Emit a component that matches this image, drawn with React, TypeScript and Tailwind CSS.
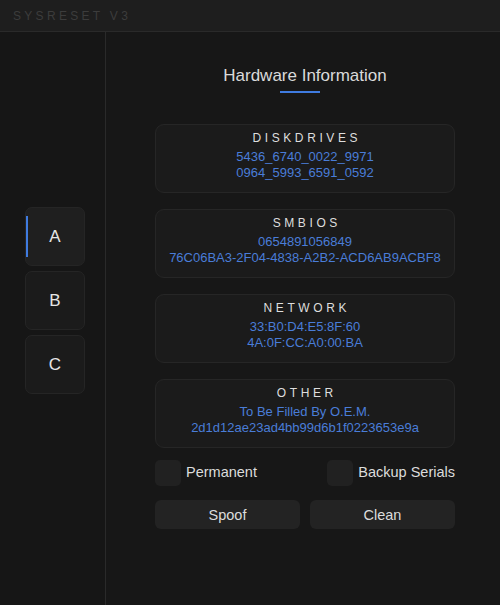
import React, { useState } from "react";

const sections = [
  { title: "DISKDRIVES", values: ["5436_6740_0022_9971", "0964_5993_6591_0592"] },
  { title: "SMBIOS", values: ["0654891056849", "76C06BA3-2F04-4838-A2B2-ACD6AB9ACBF8"] },
  { title: "NETWORK", values: ["33:B0:D4:E5:8F:60", "4A:0F:CC:A0:00:BA"] },
  { title: "OTHER", values: ["To Be Filled By O.E.M.", "2d1d12ae23ad4bb99d6b1f0223653e9a"] },
];

export default function App() {
  const [tab, setTab] = useState("A");
  const [permanent, setPermanent] = useState(false);
  const [backup, setBackup] = useState(false);

  return (
    <div
      className="w-[500px] h-[605px] bg-[#171717] flex flex-col overflow-hidden"
      style={{ fontFamily: '"Liberation Sans", Arial, sans-serif' }}
    >
      {/* title bar */}
      <div className="h-[32px] shrink-0 bg-[#1e1e1e] border-b border-[#2a2a2a] flex items-center pl-[13px]">
        <span className="text-[12px] tracking-[3.3px] text-[#3c3c3c]">SYSRESET V3</span>
      </div>

      <div className="flex flex-1 min-h-0">
        {/* sidebar */}
        <div className="w-[106px] shrink-0 border-r border-[#2a2a2a] bg-[#161616] pt-[175px] pl-[25px] flex flex-col gap-[5px]">
          {["A", "B", "C"].map((t) => (
            <button
              key={t}
              onClick={() => setTab(t)}
              className={
                "relative w-[60px] h-[59px] rounded-[7px] border border-[#252525] flex items-center justify-center text-[17px] text-[#e6e6e6] " +
                (tab === t ? "bg-[#1f1f1f]" : "bg-[#1b1b1b]")
              }
            >
              {tab === t && (
                <span className="absolute left-0 top-[8px] w-[2px] h-[41px] bg-[#3f7be0]" />
              )}
              {t}
            </button>
          ))}
        </div>

        {/* main */}
        <div className="flex-1 pl-[49px] pt-[32px]">
          <div className="w-[300px] flex flex-col">
            <div className="flex flex-col items-center">
              <h1 className="text-[17px] leading-[24px] text-[#dadada]">Hardware Information</h1>
              <div className="mt-[3px] mr-[10px] w-[40px] h-[2px] bg-[#3f7be0]" />
            </div>

            <div className="mt-[31px] flex flex-col gap-[16px]">
              {sections.map((s) => (
                <div
                  key={s.title}
                  className="h-[69px] rounded-[9px] border border-[#262626] bg-[#1b1b1b] flex flex-col items-center pt-[4.5px]"
                >
                  <div className="text-[12px] leading-[16px] tracking-[3.6px] pl-[3.6px] text-[#dedede]">
                    {s.title}
                  </div>
                  <div className="mt-[3px] flex flex-col items-center text-[13px] leading-[16px] text-[#4a7dd8]">
                    {s.values.map((v) => (
                      <div key={v}>{v}</div>
                    ))}
                  </div>
                </div>
              ))}
            </div>

            <div className="mt-[12px] flex items-center justify-between">
              <label className="flex items-center gap-[5px] cursor-pointer" onClick={() => setPermanent(!permanent)}>
                <span className="w-[26px] h-[26px] rounded-[5px] bg-[#212121] flex items-center justify-center text-[#4a7dd8] text-[14px]">
                  {permanent ? "✓" : ""}
                </span>
                <span className="text-[14.5px] text-[#dcdcdc]">Permanent</span>
              </label>
              <label className="flex items-center gap-[5px] cursor-pointer" onClick={() => setBackup(!backup)}>
                <span className="w-[26px] h-[26px] rounded-[5px] bg-[#212121] flex items-center justify-center text-[#4a7dd8] text-[14px]">
                  {backup ? "✓" : ""}
                </span>
                <span className="text-[14.5px] text-[#dcdcdc]">Backup Serials</span>
              </label>
            </div>

            <div className="mt-[14px] flex gap-[10px]">
              <button className="flex-1 h-[29px] pt-[3px] rounded-[6px] bg-[#232323] text-[14.5px] text-[#dcdcdc]">Spoof</button>
              <button className="flex-1 h-[29px] pt-[3px] rounded-[6px] bg-[#232323] text-[14.5px] text-[#dcdcdc]">Clean</button>
            </div>
          </div>
        </div>
      </div>
    </div>
  );
}
